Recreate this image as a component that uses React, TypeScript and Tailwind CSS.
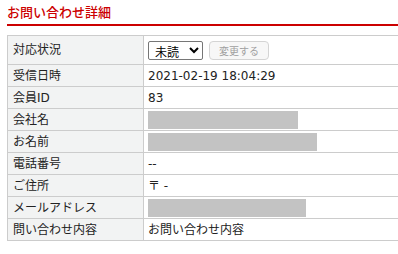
import React from "react";

const font = { fontFamily: '"DejaVu Sans", "Noto Sans CJK JP", sans-serif' };
const jp = { fontFamily: '"Noto Sans CJK JP", "Noto Sans", sans-serif' };

type Row = { label: string; value?: string; blank?: number };

const rows: Row[] = [
  { label: "受信日時", value: "2021-02-19 18:04:29" },
  { label: "会員ID", value: "83" },
  { label: "会社名", blank: 150 },
  { label: "お名前", blank: 169 },
  { label: "電話番号", value: "--" },
  { label: "ご住所", value: "〒 -" },
  { label: "メールアドレス", blank: 158 },
  { label: "問い合わせ内容", value: "お問い合わせ内容" },
];

const Label = ({ children }: { children: React.ReactNode }) => (
  <div className="w-[136px] shrink-0 bg-[#f2f3f3] border-r border-[#cccccc] pl-[5px] flex items-center">
    {children}
  </div>
);

export default function App() {
  return (
    <div className="w-[398px] h-[254px] overflow-hidden bg-white text-[12px] text-[#222]" style={font}>
      <div className="pl-[7px] pt-[3px]">
        <h2 className="text-[13px] leading-[18px] text-[#cc0000] font-medium" style={jp}>
          お問い合わせ詳細
        </h2>
        <div className="mt-[3px] h-[2px] bg-[#cc0000]" />
        <div className="mt-[9px] w-[400px] border-l border-t border-[#cccccc]">
          <div className="flex h-[29px] border-b border-[#cccccc]">
            <Label>対応状況</Label>
            <div className="flex items-center gap-[6px] pl-[4px]">
              <select
                defaultValue="未読"
                className="w-[55px] h-[19px] border border-[#767676] rounded-[2px] bg-white text-[12px] px-[2px] text-black"
                style={jp}
              >
                <option>未読</option>
                <option>既読</option>
              </select>
              <button
                disabled
                className="h-[19px] w-[60px] border border-[#d4d4d4] rounded-[4px] bg-[#f7f7f7] text-[10px] text-[#a0a0a0]"
                style={jp}
              >
                変更する
              </button>
            </div>
          </div>
          {rows.map((r) => (
            <div key={r.label} className="flex h-[22px] border-b border-[#cccccc]">
              <Label>{r.label}</Label>
              <div className="flex items-center pl-[4px]">
                {r.blank ? (
                  <div className="h-[18px] bg-[#c3c3c3]" style={{ width: r.blank }} />
                ) : (
                  r.value
                )}
              </div>
            </div>
          ))}
        </div>
      </div>
    </div>
  );
}
